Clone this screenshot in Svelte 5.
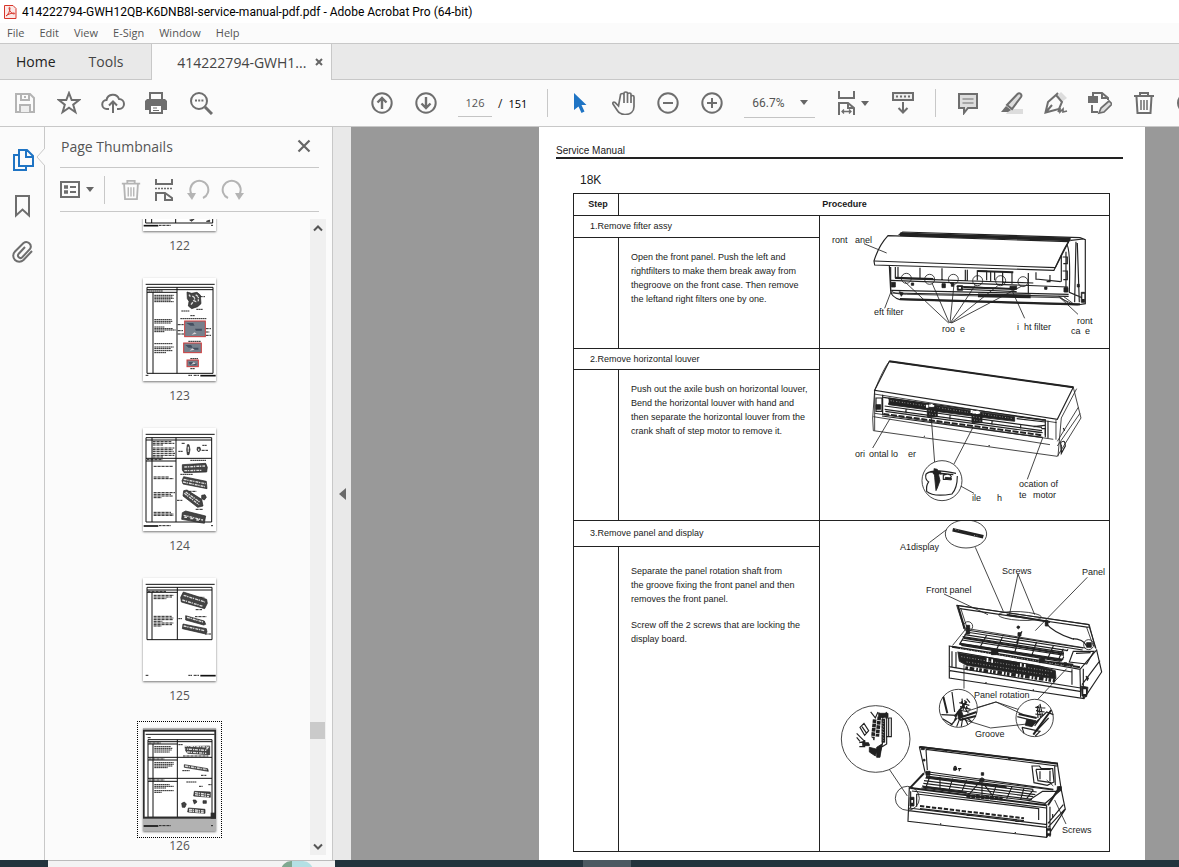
<script>
  let page = $state("126");
  let zoom = $state("66.7%");
  let selected = $state(126);

  const menus = ["File", "Edit", "View", "E-Sign", "Window", "Help"];

  const footer = "M8 292H17M136 292H148M152 292H168";

  const thumbs = [
    {
      no: 122,
      frame: "M8 19H215M8 28H209V285H8ZM26 28V285M98 28V285",
      text: "M34 60H92M34 66H92M34 72H80M48 292H84M204 292H210",
      bar: "M2 293H46",
      art: "M140 276l14-3-8 7zM190 280l10-4v5z",
      light: "",
      photos: []
    },
    {
      no: 123,
      frame: "M8 19H215M12 28H210V286H12ZM12 35H210M12 43H102M30 43V286M102 28V286",
      text: "M16 39H60M34 52H92M34 57H88M34 61H92M34 66H84M34 71H92M34 125H86M34 130H88M34 135H84M34 147H64M34 152H90M34 156H98M34 161H64M34 197H88M34 207H92M34 212H84M34 218H88M34 224H70M115 99H140M160 94H180M142 113H156M112 122H190M104 140H122M104 158H120M104 168H124M188 152H204M188 162H200M188 172H204M136 190H174M142 242H166M142 272H156M170 56H186" + footer,
      bar: "M172 293H218",
      art: "M132 42l14 4 16-3 10 8 2 26-10 9-18 6-10-8 2-14-5-8z",
      light: "M148 54l8 6-4 8 10 4M158 50l8 6v14M144 80l6-8M138 50l4 6",
      photos: [[125, 129, 62, 47], [122, 195, 53, 29], [132, 246, 34, 20]]
    },
    {
      no: 124,
      frame: "M8 19H215M9 29H206V282H9ZM9 36H206M9 91H206M9 99H99M27 29V282M99 29V282",
      text: "M29 41H86M29 46H94M29 51H60M29 60H94M29 65H90M29 70H92M29 76H96M29 82H94M29 87H60M12 95H58M32 115H90M32 147H78M32 152H92M32 194H96M32 199H84M32 204H90M32 209H56M32 253H84M32 258H92M32 262H92M106 70H120M116 46H126M178 52H192M176 67H196M142 97H190M112 139H150M138 190H160M102 217H118M158 244H180M48 293H84M204 293H210",
      bar: "M2 294H46",
      art: "M118 110l70-4 5 12-2 14-68 2-5-8zM122 146l68 14 2 22-72-14-3-10zM122 188l10-2 44 28 4 20-16 4-44-34zM176 202l10-2 4 8-6 8-8-4zM118 254l10-5 60 15-4 22-68-12zM133 50h5l3 15-3 15h-5l-2-15zM163 58h8l2 8-6 6-5-6z",
      light: "M124 117l62-3M124 128l52-1M122 154l66 13M120 162l66 14M124 196l44 34M128 192l42 30M122 262l58 14M124 268h8M142 272h8M160 276h8M136 56v18M167 62v6",
      photos: []
    },
    {
      no: 125,
      frame: "M8 19H215M12 28H207V185H12ZM12 36H207M12 43H103M27 43V185M103 28V185",
      text: "M14 40H70M32 52H92M32 57H88M32 62H70M32 115H86M32 120H92M32 125H90M32 130H58M32 135H92M32 140H88M32 144H56M170 58H184M158 95H178M156 116H190M106 122H118M186 168H204" + footer,
      bar: "M172 293H218",
      art: "M121 42l70 22 2 12-8 16-70-20-2-14zM128 113l56 16 4 10-6 2-54-15zM120 138l70 14 2 10-4 6-70-16z",
      light: "M122 52l64 20M118 66l62 19M132 118l48 14M122 144l62 14",
      photos: []
    },
    {
      no: 126,
      frame: "M8 19H215M15 35H207V268H15ZM15 41H207M15 48H103M15 88H207M15 96H103M15 151H207M15 160H103M30 48V268M103 35V268",
      text: "M14 29H24M18 45H54M34 56H84M34 61H88M34 66H86M34 72H80M18 93H64M34 104H92M34 109H92M34 114H88M34 119H74M18 156H64M34 170H80M34 175H92M34 180H70M34 188H92M34 193H56M106 50H120M120 84H196M118 128H140M174 142H190M130 162H160M168 175H180M196 170H206M48 293H84M204 293H210",
      bar: "M2 294H46",
      art: "M126 56l74-2v26l-66-4-6-8zM124 110l70 12 2 8-72-12zM154 190l48 2v16l-50-4zM116 226l8-4 6 6-4 10h-8zM136 240l50 4v12l-52-4zM150 216h8l4 6-8 6zM180 218h10v8h-10z",
      light: "M124 54l72 3-8 10-60-4M132 72l58 4M126 114l66 11M156 194l44 6M156 200l42 6M138 244l44 5M138 249l44 5",
      photos: []
    }
  ];

  const steps = [
    {
      title: "1.Remove fifter assy",
      text: [["Open the front panel. Push the left and", "rightfilters to make them break away from", "thegroove on the front case. Then remove", "the leftand right filters one by one."]]
    },
    {
      title: "2.Remove horizontal louver",
      text: [["Push out the axile bush on horizontal louver,", "Bend the horizontal louver with hand and", "then separate the horizontal louver from the", "crank shaft of step motor to remove it."]]
    },
    {
      title: "3.Remove panel and display",
      text: [
        ["Separate the panel rotation shaft from", "the groove fixing the front panel and then", "removes the front panel."],
        ["Screw off the 2 screws that are locking the", "display board."]
      ]
    }
  ];

  // x, baseline, text
  const labels = [
    [
      [12, 27, "ront"], [35, 27, "anel"], [54, 99, "eft filter"], [122, 116, "roo"], [140, 116, "e"],
      [197, 114, "i"], [204, 114, "ht filter"], [257, 108, "ront"], [251, 118, "ca"], [265, 118, "e"]
    ],
    [
      [35, 108, "ori"], [49, 108, "ontal lo"], [88, 108, "er"], [152, 152, "ile"], [177, 152, "h"],
      [199, 138, "ocation of"], [199, 149, "te"], [213, 149, "motor"]
    ],
    [
      [80, 29, "A1display"], [182, 53, "Screws"], [262, 54, "Panel"], [106, 72, "Front panel"],
      [154, 177, "Panel rotation"], [155, 216, "Groove"], [242, 312, "Screws"]
    ]
  ];
</script>

{#snippet louverUnit()}
  <g transform="translate(0 -3)">
    <path class="heavy" d="M208 40L760 118L712 214L164 127Z" fill="#fff" />
    <path class="thick" d="M208 40L760 118" />
    <path d="M208 40Q190 62 164 127L158 210L160 248L712 325L783 210L760 118M770 122L724 210L714 325M162 138L710 224M708 216V275M160 206L690 290M712 280L775 178M712 294L780 196M164 196L700 274M164 127V248" />
    <path class="heavy" d="M188 140V200M676 214V268M190 148L676 216M684 218V270M168 150h18v40h-18z" />
    <path class="solid" d="M206 150L326 168V186L206 170ZM344 172L456 188V204L344 190ZM482 192L584 206V220L482 208Z" />
    <path class="speck" d="M212 158L322 174M350 178L452 194M488 198L580 212" />
    <path class="heavy" d="M194 174L666 238M194 184L666 248M196 190L662 254M258 184v12M390 202v12M516 220v10M602 232v10M640 236L675 232M622 248L668 254M590 212L676 222M590 206L676 216" />
    <path class="thick" d="M190 198L668 262" stroke-dasharray="18 5" />
    <path class="heavy" d="M186 204L668 268M664 242h12v20" />
    <path class="solid" d="M322 178h30v28h-30zM456 198h30v26h-30zM168 170h14v14h-14z" />
    <path class="white" d="M318 170h7v9h-7zM332 168h6v8h-6zM452 186h6v9h-6zM468 188h8v10h-8zM194 154h12v10h-12z" />
    <path class="speck" d="M326 188l24 4M328 198l20 3M460 206l22 4M462 216l20 3" />
    <path d="M210 212L158 300M334 210L344 344M460 236L402 348M668 270L622 394M396 400L462 436" />
    <circle cx="366" cy="398" r="60" fill="#fff" />
    <path class="heavy" d="M318 378Q340 360 408 376M318 378Q314 394 326 402Q318 412 320 430Q340 448 396 438Q412 420 412 384M330 372L400 380M360 378h28M370 382q20-8 24 4q-4 10-24 8z" />
    <path class="solid" d="M342 362l10 2 8 34-8 22-4 8-4-40zM376 388l18 2v6l-18-2zM340 370h22v8h-22z" />
    <path class="heavy" d="M312 264l2 2M506 292l3 2M730 240l4 8M722 284q14-12 14 10l-12 22zM724 290v24" />
  </g>
{/snippet}

{#snippet filterUnit()}
  <g transform="translate(0 -3)">
    <path class="heavy" d="M236 60L248 51L780 68L796 74V266L772 270L240 254Q214 246 212 228L208 152" />
    <path class="band" d="M240 58L752 73" />
    <path class="heavy" d="M752 76L790 72M740 88Q752 100 748 232L790 250M768 80L764 262M772 84L778 262" />
    <path class="heavy" d="M204 62L746 80Q734 96 702 166L164 150L162 138Q176 92 204 62Z" fill="#fff" />
    <path class="heavy" d="M162 138L706 158L746 80" />
    <path class="heavy" d="M212 156V226M226 156V190M234 156V190M300 158V194M366 160V196M436 164V198M442 164V198M472 166V196M500 196V168H472M512 168V198M524 168V196M548 170V208M576 172V206M625 174V238M648 172V194M226 190L640 204M648 192L722 200M690 180V200H680M724 120V200M738 110V232M728 126h14v20h-12M728 168h14v26h-12" />
    <path class="heavy" d="M212 196L744 216M214 226L746 238M212 234L746 244M410 214L590 222M412 222L590 230" />
    <path class="band" d="M474 241L632 244" />
    <path class="thick" d="M430 217L585 222M240 252L780 268M226 188L340 192M472 168L580 172" />
    <path d="M214 226Q218 238 260 238L718 248L760 268M718 244L744 264M730 244L760 266" />
    <g fill="none">
      <circle cx="259" cy="190" r="15" /><circle cx="329" cy="193" r="15" /><circle cx="400" cy="193" r="15" />
      <circle cx="473" cy="197" r="15" /><circle cx="542" cy="197" r="15" /><circle cx="609" cy="200" r="15" />
    </g>
    <path class="solid" d="M214 202h12v14h-12zM274 204h7v7h-7zM366 206h10v12h-10zM394 204h7v10h-7zM412 212h16v14h-16zM570 214h20v9h-20zM674 216h7v7h-7zM732 218h12v13h-12zM772 208h6v8h-6zM238 230l12 4-6 10zM784 232h10v30h-10z" />
    <path class="white" d="M787 236h6v16h-6zM416 216h7v5h-7z" />
    <path d="M132 86L200 114M214 228L194 280M254 200L386 324M336 204L388 324M402 208L390 324M466 210L391 324M536 210L393 324M604 214L395 324M574 222L614 310M716 244L774 298" />
  </g>
{/snippet}

{#snippet openUnits()}
  <!-- front panel raised -->
  <g transform="translate(0 -9)">
    <ellipse cx="438" cy="48" rx="62" ry="42" fill="#fff" />
    <path class="band" d="M398 35L490 56" />
    <path class="speck" d="M406 34L420 38M462 52L478 55" />
    <path d="M328 74L378 36M466 88L550 280M594 168L568 292M594 168L644 290M802 178L646 338M372 228L504 290" />
    <ellipse cx="600" cy="294" rx="64" ry="13" transform="rotate(3 600 294)" />
    <path d="M410 262L808 320L826 390M410 262L432 330M422 270L440 326M398 382L440 330M800 328L820 384M432 330L796 390" />
    <path class="heavy" d="M410 262L808 320M420 272L806 328M806 320L828 392" />
    <path class="thick" d="M560 290L690 312M414 264L434 332" />
    <path class="heavy" d="M676 314Q700 344 756 362Q790 362 800 384" />
    <circle cx="444" cy="325" r="14" /><circle cx="806" cy="380" r="15" />
    <path class="heavy" d="M388 384L780 454L830 396L845 462L792 542L388 480ZM780 454L782 538M790 452V540M386 446L782 510M390 458L780 520M786 500L840 428M396 400V446M408 402V448M756 454V500M412 402L756 462" />
    <path class="heavy" d="M440 336L790 390M438 342L788 396M434 350L744 398M428 356L740 404M426 366L736 412M420 376L730 424M424 382L722 430" />
    <path class="thick" d="M432 360L736 408M420 378L726 427" />
    <path class="heavy" d="M440 344L418 380M500 352L480 388M548 356L528 398M600 350L584 404M650 372L634 416M700 384L682 424M744 394L724 430M590 372L606 340M760 400L748 432L800 438L822 400ZM730 392L716 424M768 406L812 404" />
    <path class="solid" d="M414 404L660 444L706 458L708 482L640 474L440 442L418 430Z" />
    <path class="speck" d="M424 416L700 462M440 432L690 472" />
    <path class="band" d="M436 450L706 488" stroke-dasharray="8 5 14 6 5 4" />
    <path class="thick" d="M396 386L780 448M640 426L760 440" />
    <path class="speck" d="M420 392L760 446" />
    <path class="solid" d="M514 398h20v12h-20zM658 422h16v12h-16zM594 324a4 4 0 1 0 2 0zM594 344h9v10h-9zM439 322h10v26h-10zM732 434h8v9h-8zM800 374h14v14h-14zM784 504l20 4-4 28-14-2zM798 474l8 6-4 8zM676 308h8v16h-8z" />
    <path class="white" d="M732 400h16v18h-16zM790 514h8v14h-8zM500 420h5v12h-5zM514 424h5v10h-5zM600 436h5v10h-5zM612 438h5v10h-5z" />
    <path class="heavy" d="M498 492v4M640 514v5M760 360v5" />
    <path d="M432 440V512M740 452L650 548" />
    <path d="M528 552L440 578M528 552L612 580" />
  </g>
  <g transform="translate(0 507)">
    <!-- rotation shaft and groove details -->
    <circle cx="415" cy="55" r="57" fill="#fff" /><circle cx="644" cy="84" r="56" fill="#fff" />
    <path class="thick" d="M370 20L382 70M416 84L470 66M404 80L440 34M420 90L468 78M596 72L650 84M694 60L640 134" />
    <path class="heavy" d="M396 6L404 66M364 74L410 76L400 100M368 86L398 104M412 84L392 106M420 84L410 110M428 84L424 110M434 84L444 104M442 84L456 96M636 108L680 66L700 74M646 126L686 84M606 112L660 124L646 138M606 112L612 130M660 86L644 108M592 80L640 92" />
    <path class="heavy" d="M426 26L430 60M434 30L442 56M440 26L450 38M418 38L448 46M420 50L452 58M416 60L448 66M424 34L444 70M652 48L654 84M660 42L668 78M646 52L676 54M648 62L674 66M646 72L670 76M656 46L662 84" />
    <path class="solid" d="M620 88l28 4-12 18-20-4zM412 66l12-4 6 16-14 10z" />
    <path d="M528 36L440 64M528 36L610 74M512 114L434 90M512 114L640 100" />
    <!-- electric box detail -->
    <ellipse cx="167" cy="147" rx="103" ry="100" fill="#fff" />
    <path class="heavy" d="M120 112l12-12 14 22-12 14zM126 110l14 20M152 66l14 18 8-18M176 68l12 16 12-18M196 84h18v56h-16M206 84v54M110 130l24 24-16 4M134 150v20h-16M190 150l-10 40M110 142l10 12M200 70v92l-16 10" />
    <path class="band" d="M164 88L158 150M178 80L172 140" stroke-dasharray="11 2" />
    <path class="band" d="M190 86L190 158" />
    <path class="speck" d="M190 92V154M186 98V150" />
    <path class="solid" d="M148 172l24 6-6 20-18-12zM176 70h28v12h-28zM170 172l16-10-6 40h-10zM128 158h20v9h-20z" />
    <path class="white" d="M150 138l10 8-6 22-8-10z" />
    <path d="M208 238L262 318" />
    <circle cx="262" cy="325" r="36" />
    <!-- lower unit -->
    <path class="heavy" d="M298 170L712 220L724 300M298 170L316 250M318 178L712 228M318 178L322 240M704 226L706 286M326 246L700 298" />
    <path class="thick" d="M300 171L714 221M312 250L268 296M720 290L684 346" />
    <path class="heavy" d="M636 228h22l6 8h34l4 40-20 10-40-8zM648 238l6 34 40 6M648 238h44M660 244v24M690 242v32" />
    <path class="heavy" d="M322 252L700 300M318 258L640 298M316 264L650 306M312 272L646 314M310 280L640 320M306 288L636 328M304 294L630 332" />
    <path class="thick" d="M318 261L560 292M308 290L440 308" />
    <path class="heavy" d="M330 258L318 292M360 260V296M398 266L386 304M440 270L424 308M486 262V314M530 284L516 320M576 290L560 326M612 294L602 328M668 304L626 332L676 340L718 304ZM640 300L620 326M484 270L440 322M490 280L520 320" />
    <path class="band" d="M440 318L548 326" stroke-dasharray="12 2" />
    <path class="thick" d="M272 294L680 346" />
    <path class="heavy" d="M276 303L680 354" />
    <path class="heavy" d="M268 292L264 394L680 442L736 358L724 300M680 346V442M690 350V440M266 354L682 404M266 362L680 412M290 312L656 356V390M290 312V350M272 304V354M684 400L730 344M684 412L734 358" />
    <path class="thick" d="M300 348L612 385" stroke-dasharray="13 5" />
    <path class="heavy" d="M300 356L612 392M362 400v4M586 426v4M440 376h12M586 394h12M402 232q6-8 8 6h-8M414 236h10M418 236v8M698 372v12" />
    <path class="solid" d="M484 248h7v8h-7zM480 266h12v8h-12zM318 244h12v12h-12zM270 322h12v26h-12zM680 416h12v20h-12zM712 290h12v12h-12zM401 233h7v8h-7zM310 208h5v5h-5zM304 174h9v5h-9zM376 180h5v4h-5zM566 204h6v4h-6z" />
    <path class="white" d="M274 330h5v8h-5zM683 422h6v8h-6z" />
    <path d="M704 330L738 402M700 288L680 270" />
  </g>
{/snippet}

<div class="app">
  <header class="titlebar">
    <svg width="14" height="16" viewBox="0 0 14 16">
      <path d="M1.500 1.500h8.500l3 3v10h-11.500z" fill="#fbe9e7" stroke="#d8352a" />
      <path d="M3 12c2-1 4-5 4-8c0-1-1-1-1 0c0 3 3 6 5 6c1 0 1-1 0-1c-2 0-6 1-8 3z" fill="none" stroke="#d8352a" />
    </svg>
    <h1>414222794-GWH12QB-K6DNB8I-service-manual-pdf.pdf - Adobe Acrobat Pro (64-bit)</h1>
  </header>

  <nav class="menubar">
    {#each menus as menu}
      <button>{menu}</button>
    {/each}
  </nav>

  <div class="tabs">
    <button class="tab home">Home</button>
    <button class="tab tools">Tools</button>
    <div class="tab file">
      <span>414222794-GWH1...</span>
      <button class="close-tab" aria-label="Close tab">
        <svg width="10" height="10" viewBox="0 0 10 10"><path d="M2 2l6 6M8 2l-6 6" stroke="#666" stroke-width="2" /></svg>
      </button>
    </div>
  </div>

  <div class="toolbar">
    <div class="group files">
      <button class="tool dim" aria-label="Save">
        <svg viewBox="0 0 24 24"><path d="M3 3h14l4 4v14H3zM8 3v6h8V3" /><path d="M7 21v-7h10v7" fill="#eee" /><path d="M12 5v2" /></svg>
      </button>
      <button class="tool" aria-label="Favourite">
        <svg viewBox="0 0 24 24"><path d="M12 2l2.700 7h7.500l-6 4.700l2.200 7.500L12 16.800l-6.400 4.400l2.200-7.500L1.800 9h7.500z" /></svg>
      </button>
      <button class="tool" aria-label="Upload">
        <svg viewBox="0 0 24 24"><path d="M8 18H6a4.500 4.500 0 0 1-.5-9A6.500 6.500 0 0 1 18 8a5 5 0 0 1 0 10h-2M12 22V11M8 14.500l4-4l4 4" /></svg>
      </button>
      <button class="tool" aria-label="Print">
        <svg viewBox="0 0 24 24"><path d="M5 8V2h12v6" /><path d="M2 8h18l2 2v9h-4v-4H4v4H0v-9z" fill="#6e6e6e" stroke="none" /><path d="M5 14h12v8H5z" fill="#fff" /><path d="M8 17h4M8 19.500h6" stroke-width="1" /></svg>
      </button>
      <button class="tool" aria-label="Search">
        <svg viewBox="0 0 24 24"><circle cx="10" cy="10" r="8" /><path d="M16 16l7 7" stroke-width="3" /><path d="M6 9.500h2M9.200 9.500h2M12.400 9.500h2" /></svg>
      </button>
    </div>

    <div class="group">
      <button class="tool" aria-label="Previous page">
        <svg viewBox="0 0 24 24"><circle cx="12" cy="12" r="9.700" /><path d="M12 18V7M7.500 11.500L12 7l4.500 4.500" stroke-width="2.400" /></svg>
      </button>
      <button class="tool" aria-label="Next page">
        <svg viewBox="0 0 24 24"><circle cx="12" cy="12" r="9.700" /><path d="M12 6v11M7.500 12.500L12 17l4.500-4.500" stroke-width="2.400" /></svg>
      </button>
    </div>
    <label class="pager"><input bind:value={page} aria-label="Page number" /><span>/</span><span class="total">151</span></label>
    <i class="divider"></i>

    <div class="group pointers">
      <button class="tool" aria-label="Select">
        <svg viewBox="0 0 24 24"><path d="M6 2l12.500 12h-5l3 6.500l-3 1.500l-3-6.500L6 19z" fill="#1f74c4" stroke="none" /></svg>
      </button>
      <button class="tool" aria-label="Hand">
        <svg viewBox="0 0 24 24"><path d="M6.500 15L3 11.500c-1.500-1.200-2.700.5-2 1.500l4 6c1.500 3 4 4.500 8 4.500c5.500 0 9-3 9-8V6c0-2-3-2-3 0v6V3.500c0-2-3.500-2-3.500 0V12V2.500c0-2-3.500-2-3.500 0V12V4c0-2-3.500-2-3.500 0z" stroke-width="1.700" /></svg>
      </button>
      <button class="tool" aria-label="Zoom out">
        <svg viewBox="0 0 24 24"><circle cx="12" cy="12" r="9.700" /><path d="M7 12h10" /></svg>
      </button>
      <button class="tool" aria-label="Zoom in">
        <svg viewBox="0 0 24 24"><circle cx="12" cy="12" r="9.700" /><path d="M7 12h10M12 7v10" /></svg>
      </button>
    </div>
    <div class="zoom">
      <select bind:value={zoom} aria-label="Zoom level">
        <option>66.7%</option>
        <option>100%</option>
      </select>
      <i class="arrow"></i>
    </div>

    <div class="group views">
      <button class="tool" aria-label="Fit width">
        <svg viewBox="0 0 24 24"><path d="M5 0v7h15V0M5 24V12h9l6 5v7M14 12v5h6" /><path d="M8 20.500h9M10 18.500L8 20.500L10 22.500M15 18.500l2 2l-2 2" stroke-width="1.300" /></svg>
      </button>
      <i class="arrow"></i>
      <button class="tool" aria-label="Reading mode">
        <svg viewBox="0 0 24 24"><path d="M2 2h20v7H2z" fill="#eee" /><path d="M5 5.500h14" stroke-dasharray="2 2" /><path d="M12 11v10M7.500 17l4.500 4.500l4.500-4.500" /></svg>
      </button>
    </div>
    <i class="divider"></i>

    <div class="group notes">
      <button class="tool" aria-label="Comment">
        <svg viewBox="0 0 24 24"><path d="M3 3h18v14h-9l-4 5v-5H3z" fill="#ddd" /><path d="M6.500 8h11M6.500 12h11" stroke-width="1.200" /></svg>
      </button>
      <button class="tool" aria-label="Highlight">
        <svg viewBox="0 0 24 24"><path d="M9 18h14v5H6z" fill="#ddd" stroke="none" /><path d="M17.500 3c2-2 5 .5 3.500 3L12 18l-5-4z" fill="#ddd" /><path d="M6 15l5 4l-3 2H1z" fill="#6e6e6e" stroke="none" /></svg>
      </button>
      <button class="tool" aria-label="Sign">
        <svg viewBox="0 0 24 24"><path d="M13 5l4-4l6 6l-4 3z" fill="#ddd" stroke="none" /><path d="M1.500 21.500L4 11l8-7l6 7l-3 7zM12 4l2-2M2 21l6-7" /><path d="M14 21l2-4v4l3-3v3l4-1" stroke-width="1.700" /></svg>
      </button>
      <button class="tool" aria-label="Edit PDF">
        <svg viewBox="0 0 24 24"><path d="M5 6V2h9l6 5v2M14 2v5h5M4 14v7h6" /><path d="M1 6h8v5H1z" fill="#6e6e6e" /><path d="M11 22l2-5l8-7l3 3l-8 8z" fill="#ddd" stroke-width="1.700" /></svg>
      </button>
      <button class="tool" aria-label="Delete">
        <svg viewBox="0 0 24 24"><path d="M2 5h20M8 5V2h8v3M4.500 6l1 16h13l1-16" /><path d="M9 9v10M12 9v10M15 9v10" stroke-width="1.500" /></svg>
      </button>
      <button class="tool" aria-label="Rotate">
        <svg viewBox="0 0 24 24"><circle cx="12" cy="12" r="10" /></svg>
      </button>
    </div>
  </div>

  <main>
    <nav class="rail">
      <button class="side on" aria-label="Page thumbnails">
        <svg viewBox="0 0 24 24"><path d="M8 2h8l6 6v10H8zM15 2v7h7M8 7H3v15h12v-4" /></svg>
      </button>
      <button class="side" aria-label="Bookmarks">
        <svg viewBox="0 0 24 24"><path d="M5 2h13v19.500l-6.500-6l-6.500 6z" /></svg>
      </button>
      <button class="side" aria-label="Attachments">
        <svg viewBox="0 0 24 24"><path d="M14 7l-6.500 7a2.500 2.500 0 0 0 3.500 3.500l8-8.500a4.500 4.500 0 0 0-6.500-6L4 11.500a6 6 0 0 0 8.500 8.500l8.500-9" /></svg>
      </button>
      <svg class="notch" width="9" height="18" viewBox="0 0 9 18"><path d="M9 0L1 9l8 9" fill="#fbfbfb" stroke="#c8c8c8" /></svg>
    </nav>

    <aside>
      <div class="panel-title">
        <h2>Page Thumbnails</h2>
        <button aria-label="Close panel">
          <svg width="14" height="14" viewBox="0 0 14 14"><path d="M1.500 1.500l11 11M12.500 1.500l-11 11" stroke="#666" stroke-width="2.200" /></svg>
        </button>
      </div>
      <div class="panel-tools">
        <button aria-label="Options">
          <svg width="20" height="18" viewBox="0 0 20 18"><path d="M1 1h18v15H1z" /><path d="M4 6h4M4 11h4" stroke-width="3.500" /><path d="M10 6h6M10 11h6" /></svg>
        </button>
        <i class="arrow"></i>
        <i class="divider"></i>
        <button class="dim" aria-label="Delete pages">
          <svg width="22" height="24" viewBox="0 0 24 24"><path d="M2 5h20M8 5V2h8v3M4.500 6l1 16h13l1-16" /><path d="M9 9v10M12 9v10M15 9v10" stroke-width="1.500" /></svg>
        </button>
        <button aria-label="Insert pages">
          <svg width="22" height="24" viewBox="0 0 22 24"><path d="M3 1v5h16V1M3 23v-8h9l7 5v3M12 15v7h7" /><path d="M2 10.500h18" stroke-width="1.500" stroke-dasharray="2 1" /></svg>
        </button>
        <button class="dim" aria-label="Rotate left">
          <svg width="24" height="24" viewBox="0 0 24 24"><path d="M6 17a9 9 0 1 1 11 3" /><path d="M1 15l9 0l-4 7z" fill="#b4b4b4" stroke="none" /></svg>
        </button>
        <button class="dim" aria-label="Rotate right">
          <svg width="24" height="24" viewBox="0 0 24 24"><path d="M18 17a9 9 0 1 0-11 3" /><path d="M23 15h-9l4 7z" fill="#b4b4b4" stroke="none" /></svg>
        </button>
      </div>

      <div class="pages">
        <ul>
          {#each thumbs as t}
            <li>
              <button class="thumb" class:selected={selected === t.no} aria-labelledby="page-{t.no}" onclick={() => (selected = t.no)}>
                <svg width="73" height="103" viewBox="0 0 219 309">
                  {#if selected === t.no}
                    <path d="M0 0H219V5H0zM0 268H219V309H0z" fill="#b2b2b2" />
                  {/if}
                  <path d={t.frame} fill="none" stroke="#111" stroke-width="3" />
                  <path d={t.text} fill="none" stroke="#222" stroke-width="3" stroke-dasharray="7 1 3 1" />
                  <path d={t.bar} stroke="#111" stroke-width="5" />
                  <path d={t.art} fill="#444" stroke="#222" stroke-width="2" />
                  <path d={t.light} fill="none" stroke="#ddd" stroke-width="4" stroke-dasharray="9 2 4 3" />
                  {#each t.photos as [x, y, w, h]}
                    <rect {x} {y} width={w} height={h} fill="#77808c" stroke="#cf3d3d" stroke-width="3" />
                    <path d="M{x + 5} {y + 6}h{w / 3}l4 8h-12zM{x + w / 2} {y + h / 2}h{w / 3}v6h-18z" fill="#454f60" />
                    <path d="M{x + w / 3} {y + h - 6}l9-7 6 4z" fill="#d8d2d6" />
                  {/each}
                  {#if selected === t.no}
                    <rect x="2" y="8" width="215" height="261" fill="none" stroke="#2c2c2c" stroke-width="6" />
                    <path d="M203 254h18v18h-18z" fill="#2c2c2c" />
                  {/if}
                </svg>
              </button>
              <span id="page-{t.no}">{t.no}</span>
            </li>
          {/each}
        </ul>
        <div class="scrollbar">
          <svg width="10" height="8" viewBox="0 0 10 8"><path d="M1 6.500l4-4l4 4" /></svg>
          <div class="track"><i></i></div>
          <svg width="10" height="8" viewBox="0 0 10 8"><path d="M1 1.500l4 4l4-4" /></svg>
        </div>
      </div>
    </aside>

    <button class="splitter" aria-label="Collapse panel">
      <svg width="7" height="12" viewBox="0 0 7 12"><path d="M7 0v12L0 6z" fill="#6a6a6a" /></svg>
    </button>

    <section class="document">
      <article>
        <p class="running">Service Manual</p>
        <h3>18K</h3>
        <table>
          <colgroup>
            <col class="c-step" />
            <col class="c-text" />
            <col />
          </colgroup>
          <thead>
            <tr><th>Step</th><th colspan="2" class="procedure">Procedure</th></tr>
          </thead>
          <tbody>
            {#each steps as step, i}
              <tr class="name name{i}">
                <td colspan="2">{step.title}</td>
                <td rowspan="2" class="figure">
                  <svg width="289" height={[131, 170, 329][i]}>
                    <g class="drawing" transform="scale(0.3333)">
                      {#if i === 0}
                        {@render filterUnit()}
                      {:else if i === 1}
                        {@render louverUnit()}
                      {:else}
                        {@render openUnits()}
                      {/if}
                    </g>
                    {#each labels[i] as [x, y, label]}
                      <text {x} {y}>{label}</text>
                    {/each}
                  </svg>
                </td>
              </tr>
              <tr class="step step{i}">
                <td></td>
                <td>
                  {#each step.text as para}
                    <p>
                      {#each para as line}{line}<br />{/each}
                    </p>
                  {/each}
                </td>
              </tr>
            {/each}
          </tbody>
        </table>
      </article>
    </section>
  </main>

  <footer>
    <div class="search"><i></i></div>
    <div class="task"></div>
  </footer>
</div>

<style>
  :global(body) {
    margin: 0;
  }

  .app {
    display: flex;
    flex-direction: column;
    height: 100vh;
    overflow: hidden;
    background: #fbfbfb;
    font-family: "Open Sans", "Noto Sans", sans-serif;
    font-size: 12px;
    color: #444;
  }

  button, input, select {
    font: inherit;
    color: inherit;
    background: none;
    border: 0;
    padding: 0;
    margin: 0;
  }

  h1, h2, h3, p, ul {
    margin: 0;
    padding: 0;
    font-weight: normal;
  }

  svg {
    display: block;
    flex: none;
  }

  .titlebar {
    display: flex;
    align-items: center;
    gap: 5px;
    height: 23px;
    padding-left: 3px;
    background: #fff;
  }

  .titlebar h1 {
    font-family: Roboto, "Open Sans", sans-serif;
    font-size: 12px;
    color: #000;
    white-space: nowrap;
  }

  .menubar {
    display: flex;
    align-items: flex-start;
    gap: 15px;
    height: 20px;
    padding-left: 7px;
    font-size: 11px;
    line-height: 19px;
    color: #555;
  }

  .tabs {
    display: flex;
    flex: none;
    height: 35px;
    border-top: 1px solid #c8c8c8;
    border-bottom: 1px solid #c8c8c8;
    background: #e9e9e9;
    font-size: 14px;
  }

  .home {
    padding: 0 15px 0 16px;
    color: #222;
  }

  .tools {
    padding: 0 28px 0 18px;
  }

  .file {
    display: flex;
    align-items: center;
    gap: 8px;
    height: 36px;
    padding: 0 7px 0 25px;
    background: #fbfbfb;
    border-left: 1px solid #c8c8c8;
    border-right: 1px solid #c8c8c8;
  }

  .toolbar {
    display: flex;
    align-items: center;
    flex: none;
    height: 46px;
    padding-left: 3px;
    border-bottom: 1px solid #c8c8c8;
    overflow: hidden;
  }

  .group {
    display: flex;
    align-items: center;
    flex: none;
  }

  .files {
    margin-right: 137px;
  }

  .tool {
    display: flex;
    justify-content: center;
    width: 44px;
  }

  .tool svg, .side svg {
    width: 24px;
    height: 24px;
  }

  .tool svg, .side svg, .panel-tools svg {
    fill: none;
    stroke: #6e6e6e;
    stroke-width: 2;
  }

  .dim svg {
    stroke: #b4b4b4;
  }

  .pager {
    display: flex;
    align-items: center;
    flex: none;
    gap: 6px;
    margin-left: 10px;
    color: #222;
  }

  .pager input {
    box-sizing: border-box;
    width: 34px;
    height: 28px;
    border-bottom: 1px solid #c4c4c4;
    text-align: center;
    font-size: 11px;
    color: #555;
  }

  .total {
    font-size: 11px;
    color: #000;
  }

  .divider {
    flex: none;
    width: 1px;
    height: 28px;
    background: #c8c8c8;
  }

  .pager + .divider {
    margin-left: 20px;
  }

  .pointers {
    margin-left: 10px;
  }

  .zoom {
    display: flex;
    align-items: center;
    flex: none;
    width: 71px;
    height: 28px;
    margin-left: 10px;
    border-bottom: 1px solid #c4c4c4;
    color: #555;
  }

  .zoom select {
    width: 56px;
    padding-left: 8px;
    appearance: none;
    font-family: Roboto, "Open Sans", sans-serif;
    font-size: 12px;
  }

  .arrow {
    flex: none;
    width: 0;
    height: 0;
    border: 4px solid transparent;
    border-top: 5px solid #666;
    border-bottom: 0;
  }

  .views {
    margin-left: 9px;
  }

  .views .arrow {
    margin: 0 12px 0 -7px;
  }

  .views + .divider {
    margin-left: 10px;
  }

  .notes {
    margin-left: 10px;
  }

  main {
    display: flex;
    flex: 1;
    min-height: 0;
  }

  .rail {
    position: relative;
    display: flex;
    flex-direction: column;
    align-items: center;
    gap: 22px;
    flex: none;
    width: 45px;
    padding: 21px 0 0 1px;
    box-sizing: border-box;
    border-right: 1px solid #c8c8c8;
  }

  .side.on svg {
    stroke: #1f74c4;
  }

  .notch {
    position: absolute;
    top: 21px;
    right: -1px;
  }

  aside {
    display: flex;
    flex-direction: column;
    flex: none;
    width: 287px;
    border-right: 1px solid #c8c8c8;
  }

  .panel-title, .panel-tools {
    display: flex;
    align-items: center;
    flex: none;
    margin: 0 13px 0 15px;
    border-bottom: 1px solid #c8c8c8;
  }

  .panel-title {
    justify-content: space-between;
    height: 38px;
    padding: 0 8px 2px 1px;
  }

  .panel-title h2 {
    font-size: 14px;
    color: #555;
  }

  .panel-tools {
    height: 43px;
    gap: 11px;
  }

  .panel-tools .arrow {
    margin: 0 -1px 0 -5px;
  }

  .panel-tools .divider {
    margin-right: 4px;
  }

  .pages {
    display: flex;
    flex: 1;
    min-height: 0;
    margin: 7px 6px 0 0;
  }

  ul {
    display: flex;
    flex-direction: column;
    justify-content: flex-end;
    align-items: center;
    gap: 18px;
    flex: 1;
    padding: 0 0 7px 4px;
    overflow: hidden;
    list-style: none;
  }

  li {
    display: flex;
    flex-direction: column;
    align-items: center;
    flex: none;
    line-height: 15px;
    color: #555;
  }

  .thumb {
    padding: 6px 5px;
    border: 1px dotted transparent;
  }

  .thumb.selected {
    border-color: #000;
  }

  .thumb svg {
    background: #fff;
    box-shadow: 0 1px 2px #777;
  }

  .scrollbar {
    display: flex;
    flex-direction: column;
    align-items: center;
    width: 16px;
    margin-bottom: 5px;
    padding: 5px 0 4px;
    box-sizing: border-box;
    background: #f0f0f0;
  }

  .scrollbar svg {
    fill: none;
    stroke: #555;
    stroke-width: 2;
  }

  .track {
    flex: 1;
    align-self: stretch;
    display: flex;
    flex-direction: column;
    justify-content: flex-end;
  }

  .track i {
    height: 17px;
    margin: 0 1px 104px 0;
    background: #cacaca;
  }

  .splitter {
    display: flex;
    align-items: center;
    justify-content: center;
    flex: none;
    width: 18px;
    background: #e9e9e9;
  }

  .document {
    display: flex;
    justify-content: flex-end;
    flex: 1;
    padding-right: 34px;
    background: #999;
    overflow: hidden;
  }

  article {
    box-sizing: border-box;
    flex: none;
    width: 606px;
    padding: 18px 22px 0 17px;
    background: #fff;
    color: #1a1a1a;
    font-family: "Liberation Sans", Arial, sans-serif;
    font-size: 9px;
    line-height: 14px;
  }

  .running {
    line-height: 12px;
    border-bottom: 2px solid #222;
    font-size: 10px;
  }

  h3 {
    margin: 14px 0 6px 24px;
    font-size: 12px;
    line-height: 14px;
  }

  table {
    width: 537px;
    margin-left: 17px;
    border-collapse: collapse;
    table-layout: fixed;
  }

  .c-step {
    width: 45px;
  }

  .c-text {
    width: 201px;
  }

  th, td {
    padding: 0;
    border: 1px solid #222;
    vertical-align: middle;
  }

  th {
    height: 20px;
    padding: 0 0 1px 4px;
  }

  .procedure {
    padding: 0 39px 1px 0;
  }

  .name td:first-child {
    height: 20px;
    padding: 0 0 1px 16px;
  }

  .name1 td:first-child {
    height: 19px;
  }

  .name2 td:first-child {
    height: 24px;
  }

  .step td {
    height: 98px;
    padding: 12px 0 0 12px;
    vertical-align: top;
    white-space: nowrap;
  }

  .step1 td {
    height: 138px;
  }

  .step2 td {
    height: 287px;
    padding-top: 17px;
  }

  .step p + p {
    margin-top: 12px;
  }

  td.figure {
    vertical-align: top;
  }

  .figure text {
    fill: #1a1a1a;
  }

  .drawing {
    fill: none;
    stroke: #222;
    stroke-width: 2.500;
  }

  .heavy {
    stroke-width: 3.500;
  }

  .thick {
    stroke-width: 6;
  }

  .band {
    stroke-width: 11;
  }

  .solid {
    fill: #222;
  }

  .speck {
    stroke: #ddd;
    stroke-width: 2;
    stroke-dasharray: 3 5 2 7;
  }

  .white {
    fill: #fff;
    stroke: none;
  }

  footer {
    display: flex;
    flex: none;
    height: 7px;
    padding-left: 48px;
    background: #22343d;
  }

  .search {
    width: 287px;
    border-top: 1px solid #bbb;
    background: #f3f3f3;
    overflow: hidden;
  }

  .search i {
    display: block;
    width: 32px;
    height: 20px;
    margin-left: 233px;
    border-radius: 16px;
    background: linear-gradient(90deg, #7fa890 35%, #b4e0e4 35%);
  }

  .task {
    width: 48px;
    margin-left: 248px;
    background: #4b5a62;
  }
</style>
